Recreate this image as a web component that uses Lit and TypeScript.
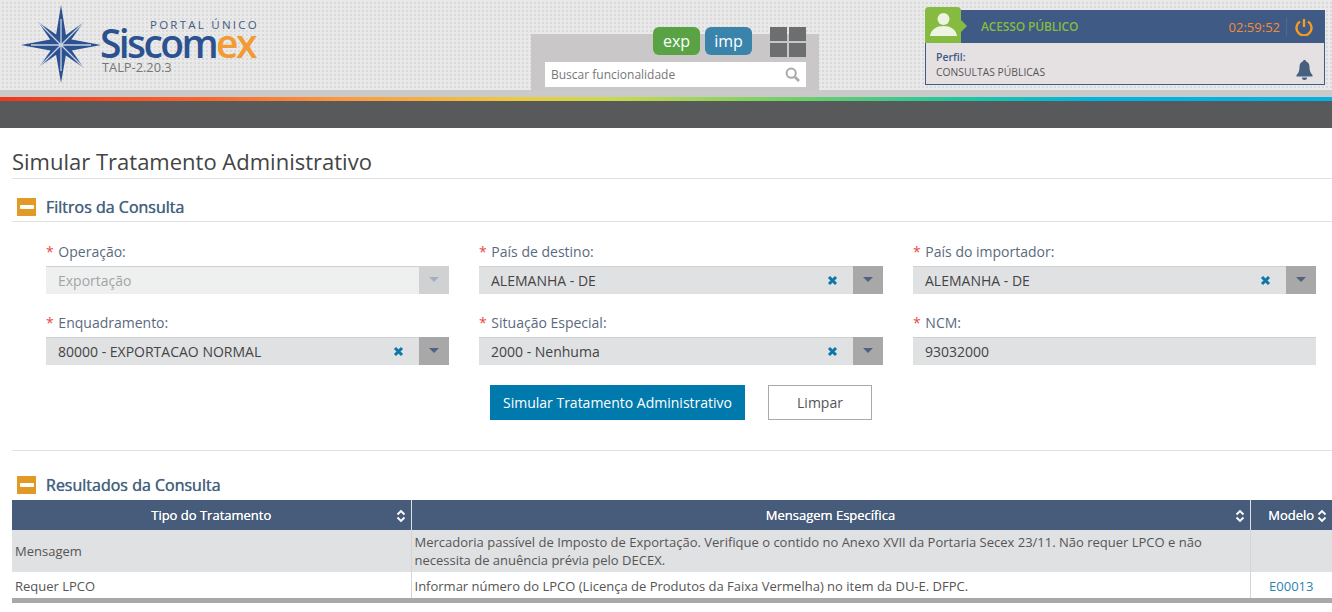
import { LitElement, html, css, svg } from "lit";
import { customElement } from "lit/decorators.js";

const minusIcon = html`<span class="minus"><i></i></span>`;
const sortIcon = html`<svg class="sort" width="10" height="14" viewBox="0 0 10 14"><path d="M1.500 5.500 5 2l3.500 3.500M1.500 8.500 5 12l3.500-3.500" fill="none" stroke="#fff" stroke-width="1.800"/></svg>`;

function star() {
  const pts = "40,0 45.5,33.5 80,40 45.5,46.5 40,78 34.5,46.5 0,40 34.5,33.5";
  return svg`<svg class="star" width="80" height="78" viewBox="0 0 80 78">
    <g transform="rotate(45 40 40) translate(8 8) scale(.8)"><polygon points="${pts}" fill="#2c5191"/></g>
    <polygon points="${pts}" fill="#2c5191"/>
    <path d="M40 40 18 18M40 40 62 18M40 40 18 62M40 40 62 62M40 40H10M40 40H70M40 40V14M40 40V66" stroke="#c8d2e2" stroke-width="1.300"/>
  </svg>`;
}

@customElement("app-root")
export class AppRoot extends LitElement {
  static styles = css`
    :host { display: block; width: 1332px; height: 612px; overflow: hidden; background: #fff; font-family: "Open Sans", sans-serif; color: #444; font-size: 14px; }
    * { box-sizing: border-box; }
    .top { height: 90px; display: flex; position: relative; background-color: #d9d9d9; background-image: linear-gradient(90deg, #e9e9e9 50%, transparent 50%), linear-gradient(#e9e9e9 50%, transparent 50%); background-size: 4px 4px; }
    .logo { width: 531px; position: relative; flex: none; padding: 5px 0 0 21px; display: flex; }
    .star { flex: none; }
    .brand { margin-left: -1px; display: flex; flex-direction: column; }
    .portal { font: 500 11.5px/8px "Open Sans", sans-serif; letter-spacing: 2.25px; color: #3f5a85; margin: 16px 0 0 50px; white-space: nowrap; }
    .sisc { font: 600 39px/27px "Open Sans", sans-serif; letter-spacing: -2.6px; color: #2c5191; white-space: nowrap; }
    .sisc b { color: #f39a33; font-weight: 600; }
    .ver { font-size: 12.800px; color: #777; line-height: 14px; margin: 4px 0 0 2px; }
    .search { width: 288px; height: 56px; margin-top: 34px; background: #c9c7c7; flex: none; padding: 28px 13px 0 14px; position: relative; }
    .box { height: 25px; background: #fff; display: flex; align-items: center; justify-content: space-between; padding: 0 6px; font-size: 12px; color: #777; }
    .pill { position: absolute; top: -7px; width: 47px; height: 28px; border-radius: 6px; color: #fff; font-size: 16px; display: flex; align-items: center; justify-content: center; }
    .exp { left: 122px; background: #5aa345; }
    .imp { left: 174px; background: #3a83ab; }
    .grid { position: absolute; left: 239px; top: -7px; width: 36px; height: 30px; display: grid; grid-template-columns: 17px 17px; grid-template-rows: 14px 14px; gap: 2px; }
    .grid i { background: #6d6e70; }
    .user { position: absolute; left: 925px; top: 10px; width: 400px; height: 75px; border: 1px solid #3f5a85; background: #e5e1e3; }
    .ubar { height: 33px; background: #3f5a85; display: flex; align-items: center; padding-left: 56px; margin: -1px -1px 0; color: #86bb41; font-size: 12px; letter-spacing: -.15px; font-weight: 600; position: relative; }
    .avatar { position: absolute; left: 0; top: -3px; width: 36px; height: 36px; background: #86bb41; border-radius: 4px 4px 0 0; }
    .avatar::after { content: ""; position: absolute; left: 36px; top: 13px; border-left: 6px solid #86bb41; border-top: 6px solid transparent; border-bottom: 6px solid transparent; }
    .clock { margin-left: auto; color: #f68a32; font-size: 13px; letter-spacing: 0; font-weight: 400; padding-right: 6px; border-right: 1px solid #52698f; height: 18px; line-height: 18px; }
    .pow { margin: 0 12px 0 8px; display: block; }
    .ubody { display: flex; justify-content: space-between; padding: 7px 11px 0 10px; }
    .perfil { font-size: 10.500px; font-weight: 600; color: #3f5a85; line-height: 15px; }
    .cons { font-size: 10.300px; color: #555; line-height: 15px; letter-spacing: .03px; }
    .bell { margin-top: 10px; }
    .strip { height: 7px; background: #cbcaca; }
    .rainbow { height: 4px; background: linear-gradient(90deg, #f0371b 0%, #f9642a 15%, #fd9a3e 26%, #eccb3f 39%, #c8da4c 46%, #6dcf68 60%, #1fc7a0 72%, #00b4e0 82%, #05b0e3 100%); }
    .dark { height: 27px; background: #58595b; }
    .main { padding: 0 0 0 12px; }
    h1 { margin: 0; height: 51px; padding-top: 18px; font-size: 22px; line-height: 30px; font-weight: 400; color: #444; border-bottom: 1px solid #e2e2e2; }
    .sec { display: flex; align-items: center; gap: 10px; height: 43px; border-bottom: 1px solid #e2e2e2; padding: 13px 0 0 5px; font-size: 16px; font-weight: 500; color: #47607f; text-shadow: 0 0 .7px #47607f; }
    .minus { width: 19px; height: 18px; background: #e09a25; display: flex; align-items: center; justify-content: center; flex: none; }
    .minus i { width: 14px; height: 4px; border-radius: 1px; background: #fff; }
    .form { display: grid; grid-template-columns: 403px 404px 403px; column-gap: 30px; row-gap: 19px; padding: 20px 0 0 34px; }
    .lab { font-size: 14px; line-height: 19px; color: #5a6a7e; height: 24px; white-space: nowrap; }
    .lab span { color: #e8473f; margin-right: 1px; }
    .sel { height: 28px; background: #e0e1e3; border-top: 1px solid #cfd0d2; display: flex; align-items: center; padding-left: 12px; font-size: 14px; color: #444; }
    .sel.dis { background: #eef0f0; color: #a4a4a4; }
    .x { margin-left: auto; margin-right: 15px; display: block; }
    .arr { margin-left: auto; width: 30px; height: 28px; margin-top: -1px; background: #a8a8a8; display: flex; align-items: center; justify-content: center; flex: none; padding-bottom: 2px; }
    .x + .arr { margin-left: 0; }
    .dis .arr { background: #d0d1d2; }
    .arr i { border-left: 5.500px solid transparent; border-right: 5.500px solid transparent; border-top: 5px solid #4f6283; }
    .dis .arr i { border-top-color: #a3aebe; }
    .btns { display: flex; padding: 20px 0 0 478px; gap: 23px; }
    .btn { height: 35px; background: #0079ad; color: #fff; font-size: 14px; display: flex; align-items: center; justify-content: center; width: 255px; font-weight: 500; }
    .btn.alt { width: 104px; background: #fff; border: 1px solid #aaa; color: #555; font-weight: 400; }
    hr { border: 0; border-top: 1px solid #e2e2e2; margin: 30px 0 0; }
    .sec.res { border: 0; height: 49px; padding-top: 18px; }
    .tbl { width: 1320px; border-bottom: 5px solid #a8a8a8; }
    table { border-collapse: collapse; table-layout: fixed; width: 1320px; font-size: 13px; color: #555; }
    th { height: 30px; background: #475c7a; color: #fff; font-weight: 500; font-size: 13px; position: relative; padding: 0; border-left: 1px solid #dfe1e3; text-shadow: 0 0 .6px #fff; }
    th:first-child, td:first-child { border-left: 0; }
    th .sort { position: absolute; right: 5px; top: 9px; }
    td { padding: 0 3px; border-left: 1px solid #d5d5d5; line-height: 18px; }
    tr.a td { background: #e0e1e3; height: 42px; }
    tr.b td { height: 26px; padding-top: 2px; }
    a { color: #2b83b0; text-decoration: none; }
    .c { text-align: center; }
  `;

  private field(label: string, value: string, mode: "clear" | "dis" | "text") {
    return html`<div>
      <div class="lab"><span>*</span> ${label}</div>
      <div class="sel ${mode === "dis" ? "dis" : ""}">${value}
        ${mode === "clear" ? html`<svg class="x" width="11" height="11" viewBox="0 0 11 11"><path d="M2 2l7 7M9 2l-7 7" stroke="#0e77aa" stroke-width="3"/></svg>` : ""}
        ${mode !== "text" ? html`<div class="arr"><i></i></div>` : ""}
      </div>
    </div>`;
  }

  render() {
    return html`
      <div class="top">
        <div class="logo">
          ${star()}
          <div class="brand">
            <div class="portal">PORTAL ÚNICO</div>
            <div class="sisc">Siscom<b>ex</b></div>
            <div class="ver">TALP-2.20.3</div>
          </div>
        </div>
        <div class="search">
          <div class="pill exp">exp</div>
          <div class="pill imp">imp</div>
          <div class="grid"><i></i><i></i><i></i><i></i></div>
          <div class="box">Buscar funcionalidade
            <svg width="15" height="15" viewBox="0 0 15 15"><circle cx="6.200" cy="6.200" r="4.600" fill="none" stroke="#aaa" stroke-width="2"/><path d="M10 10l4 4" stroke="#aaa" stroke-width="2.600"/></svg>
          </div>
        </div>
        <div class="user">
          <div class="ubar">
            <div class="avatar"><svg width="36" height="36" viewBox="0 0 36 36"><circle cx="18.500" cy="12" r="6" fill="#eef4e2"/><path d="M5 29c1-7 7-10 13.500-10S31 22 32 29z" fill="#eef4e2"/></svg></div>
            ACESSO PÚBLICO
            <span class="clock">02:59:52</span>
            <svg class="pow" width="18" height="18" viewBox="0 0 18 18"><path d="M5 3.500a7.500 7.500 0 1 0 8 0" fill="none" stroke="#f39c1f" stroke-width="2.400"/><path d="M9 1v8" stroke="#f39c1f" stroke-width="2.400"/></svg>
          </div>
          <div class="ubody">
            <div><div class="perfil">Perfil:</div><div class="cons">CONSULTAS PÚBLICAS</div></div>
            <svg class="bell" width="17" height="20" viewBox="0 0 17 20"><path d="M8.500 0c1 0 1.600.7 1.600 1.600 2.400.7 3.400 2.800 3.400 5.400 0 4 1 6 3 8v1.500H.500V15c2-2 3-4 3-8 0-2.600 1-4.700 3.400-5.400C6.900.7 7.500 0 8.500 0zM6 17.500h5A2.500 2.500 0 0 1 6 17.500z" fill="#47607f"/></svg>
          </div>
        </div>
      </div>
      <div class="strip"></div>
      <div class="rainbow"></div>
      <div class="dark"></div>
      <div class="main">
        <h1>Simular Tratamento Administrativo</h1>
        <div class="sec">${minusIcon}Filtros da Consulta</div>
        <div class="form">
          ${this.field("Operação:", "Exportação", "dis")}
          ${this.field("País de destino:", "ALEMANHA - DE", "clear")}
          ${this.field("País do importador:", "ALEMANHA - DE", "clear")}
          ${this.field("Enquadramento:", "80000 - EXPORTACAO NORMAL", "clear")}
          ${this.field("Situação Especial:", "2000 - Nenhuma", "clear")}
          ${this.field("NCM:", "93032000", "text")}
        </div>
        <div class="btns">
          <div class="btn">Simular Tratamento Administrativo</div>
          <div class="btn alt">Limpar</div>
        </div>
        <hr />
        <div class="sec res">${minusIcon}Resultados da Consulta</div>
        <div class="tbl">
          <table>
            <colgroup><col style="width:399px" /><col style="width:839px" /><col style="width:82px" /></colgroup>
            <tr><th>Tipo do Tratamento${sortIcon}</th><th>Mensagem Específica${sortIcon}</th><th>Modelo${sortIcon}</th></tr>
            <tr class="a"><td>Mensagem</td><td>Mercadoria passível de Imposto de Exportação. Verifique o contido no Anexo XVII da Portaria Secex 23/11. Não requer LPCO e não necessita de anuência prévia pelo DECEX.</td><td></td></tr>
            <tr class="b"><td>Requer LPCO</td><td>Informar número do LPCO (Licença de Produtos da Faixa Vermelha) no item da DU-E. DFPC.</td><td class="c"><a>E00013</a></td></tr>
          </table>
        </div>
      </div>
    `;
  }
}
